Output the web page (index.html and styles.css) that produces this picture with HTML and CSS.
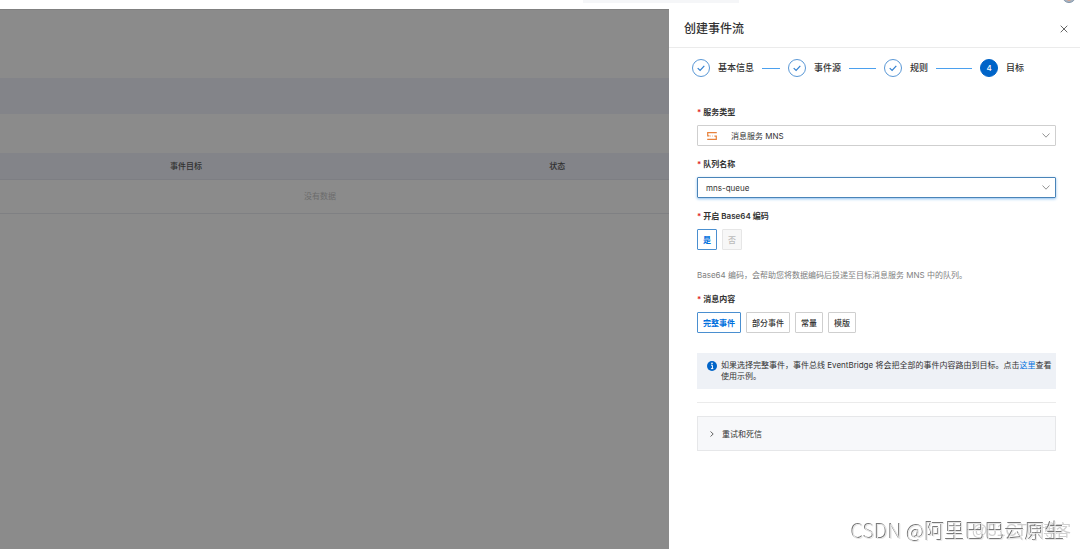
FILE: index.html
```html
<!DOCTYPE html>
<html lang="zh-CN">
<head>
<meta charset="utf-8">
<title>创建事件流</title>
<link rel="stylesheet" href="styles.css">
</head>
<body>
<header class="topbar">
  <div class="topbar-search"></div>
  <svg class="topbar-avatar" viewBox="0 0 14 3" aria-hidden="true"><circle cx="7" cy="-4" r="6.5" fill="#a9b4c0" stroke="#7f93a8"/><circle cx="7" cy="-1" r="2" fill="#d9a08c"/></svg>
</header>
<div class="layout">
  <main class="page">
    <div class="page-band"></div>
    <table class="streams">
      <colgroup><col class="col-source"><col class="col-target"><col></colgroup>
      <thead><tr><th></th><th>事件目标</th><th>状态</th></tr></thead>
      <tbody><tr><td colspan="3">没有数据</td></tr></tbody>
    </table>
  </main>
  <aside class="drawer">
    <div class="drawer-header">
      <h1>创建事件流</h1>
      <button class="close" type="button" aria-label="关闭"><svg viewBox="0 0 8 8"><path d="M.7.7l6.6 6.6M7.3.7L.7 7.3"/></svg></button>
    </div>
    <ol class="steps">
      <li class="step"><span class="step-dot"><svg viewBox="0 0 10 10"><path d="M1.7 5.1l2.4 2.3 4.2-4.5"/></svg></span><span>基本信息</span><i class="step-line"></i></li>
      <li class="step"><span class="step-dot"><svg viewBox="0 0 10 10"><path d="M1.7 5.1l2.4 2.3 4.2-4.5"/></svg></span><span>事件源</span><i class="step-line"></i></li>
      <li class="step"><span class="step-dot"><svg viewBox="0 0 10 10"><path d="M1.7 5.1l2.4 2.3 4.2-4.5"/></svg></span><span>规则</span><i class="step-line"></i></li>
      <li class="step"><span class="step-dot step-dot-current">4</span><span>目标</span></li>
    </ol>
    <form class="form">
      <div class="field">
        <label class="label" for="service">服务类型</label>
        <div class="select">
          <svg class="mns" viewBox="0 0 10 8" aria-hidden="true"><path d="M9.8.7H.7v3.1h1.8M.2 7.3h9.1V4.2H7.5"/><path class="mns-dots" d="M3 4h4.4"/></svg>
          <select id="service"><option>消息服务 MNS</option></select>
          <svg class="chevron" viewBox="0 0 8 5"><path d="M.5.5L4 4.2 7.5.5"/></svg>
        </div>
      </div>
      <div class="field">
        <label class="label" for="queue">队列名称</label>
        <div class="select select-focus">
          <select id="queue"><option>mns-queue</option></select>
          <svg class="chevron" viewBox="0 0 8 5"><path d="M.5.5L4 4.2 7.5.5"/></svg>
        </div>
      </div>
      <div class="field" role="group" aria-labelledby="base64">
        <span class="label" id="base64">开启 Base64 编码</span>
        <div class="options">
          <button class="option option-on" type="button">是</button>
          <button class="option" type="button" disabled>否</button>
        </div>
        <p class="help">Base64 编码，会帮助您将数据编码后投递至目标消息服务 MNS 中的队列。</p>
      </div>
      <div class="field" role="group" aria-labelledby="content">
        <span class="label" id="content">消息内容</span>
        <div class="options">
          <button class="option option-on" type="button">完整事件</button>
          <button class="option" type="button">部分事件</button>
          <button class="option" type="button">常量</button>
          <button class="option" type="button">模版</button>
        </div>
      </div>
      <div class="notice">
        <svg class="notice-icon" viewBox="0 0 10 10" aria-hidden="true"><circle cx="5" cy="5" r="5" fill="#0064c8"/><path d="M4 4.2h1.4v3.4M3.9 7.6h2.4" fill="none" stroke="#fff"/><circle cx="5" cy="2.4" r=".8" fill="#fff"/></svg>
        <p>如果选择完整事件，事件总线 EventBridge 将会把全部的事件内容路由到目标。点击<a href="#">这里</a>查看使用示例。</p>
      </div>
      <hr>
      <button class="collapse" type="button"><svg viewBox="0 0 4 6"><path d="M.5.5L3.2 3 .5 5.5"/></svg>重试和死信</button>
    </form>
  </aside>
</div>
<div class="mark mark-back">@51CTO博客</div>
<div class="mark mark-front">CSDN @阿里巴巴云原生</div>
</body>
</html>
```
FILE: styles.css
```css
* { box-sizing: border-box; }
body {
  margin: 0;
  min-height: 100vh;
  display: flex;
  flex-direction: column;
  overflow: hidden;
  background: #fff;
  color: #333;
  font: 8px/12px Inter, "Noto Sans CJK SC", sans-serif;
}
button, select { font: inherit; color: inherit; }
h1, p, ol { margin: 0; padding: 0; }
svg { display: block; flex: none; fill: none; }

.topbar {
  height: 9px;
  display: flex;
  justify-content: space-between;
  padding: 0 4px 0 54%;
}
.topbar-search { width: 156px; height: 3px; background: #f5f6f8; }
.topbar-avatar { width: 14px; height: 3px; }

.layout {
  flex: 1;
  display: grid;
  grid-template-columns: minmax(0, 669fr) minmax(0, 411fr);
}

.page { background: #8b8b8b; padding-top: 68px; border-top: 1px solid #808080; }
.page-band { height: 36px; margin-bottom: 39px; background: #838489; }
.streams { width: 100%; table-layout: fixed; border-collapse: collapse; }
.col-source { width: 25.4%; }
.col-target { width: 56.7%; }
.streams th {
  height: 26px;
  padding: 0;
  background: #838489;
  border-bottom: 1px solid #7d7e83;
  color: #303030;
  font-weight: 500;
  text-align: left;
}
.streams td {
  height: 34px;
  padding: 0 29px 0 0;
  border-bottom: 1px solid #7f8083;
  color: #6b6b6b;
  text-align: center;
}

.drawer { background: #fff; }
.drawer-header {
  height: 39px;
  display: flex;
  align-items: center;
  justify-content: space-between;
  padding: 1px 12px 0 15px;
  border-bottom: 1px solid #ebebeb;
}
.drawer-header h1 { font-size: 12px; line-height: 18px; font-weight: 500; }
.close { padding: 0; border: 0; background: none; }
.close svg { width: 8px; height: 8px; stroke: #555; stroke-width: .9; }

.steps {
  display: flex;
  padding: 11px 4px 0 23px;
  list-style: none;
  font-size: 9px;
  font-weight: 500;
}
.step { flex: 1 1 0; display: flex; align-items: center; gap: 8px; white-space: nowrap; }
.step-dot {
  flex: none;
  width: 18px;
  height: 18px;
  display: grid;
  place-items: center;
  border: 1px solid #5a98d6;
  border-radius: 50%;
}
.step-dot svg { width: 10px; height: 10px; stroke: #2f7fd0; stroke-width: 1.2; }
.step-dot-current { background: #0064c8; border-color: #0064c8; color: #fff; font-size: 8px; }
.step-line { flex: 1; height: 1px; margin-right: 8px; background: #4ba0ee; }

.form { padding: 29px 24px 0 28px; }
.field { margin-bottom: 12px; }
.label { display: block; margin-bottom: 7px; font-weight: 600; }
.label::before { content: "*"; margin-right: 2px; color: #e02020; }

.select {
  height: 21px;
  display: flex;
  align-items: center;
  padding: 0 5px 0 8px;
  border: 1px solid #cfcfcf;
  border-radius: 1px;
}
.select-focus { border-color: #4a84b8; box-shadow: 0 1px 3px #8dc0f0; }
.select select { flex: 1; min-width: 0; padding: 0; border: 0; outline: 0; background: none; appearance: none; }
.mns { width: 10px; height: 8px; margin: 0 14px 0 1px; stroke: #e8823c; stroke-width: 1.2; }
.mns-dots { stroke-width: 1; stroke-dasharray: 1 1; opacity: .6; }
.chevron { width: 8px; height: 5px; stroke: #888; stroke-width: .9; }

.options { display: flex; gap: 5px; }
.option {
  height: 21px;
  padding: 0 5px;
  border: 1px solid #cfcfcf;
  border-radius: 1px;
  background: #fff;
  font-weight: 500;
}
.option-on { border-color: #4a8fd0; color: #0070dd; font-weight: 600; }
.option:disabled { border-color: #e6e6e6; background: #f7f7f7; color: #bbb; }
.help { margin-top: 19px; color: #808080; }

.notice {
  display: flex;
  gap: 4px;
  margin-top: 20px;
  padding: 7px 4px 7px 10px;
  background: #eef1f6;
  line-height: 11px;
}
.notice-icon { width: 10px; height: 10px; margin-top: 1px; }
.notice a { color: #0070dd; text-decoration: none; }
hr { margin: 13px 0; border: 0; border-top: 1px solid #ebebeb; }
.collapse {
  width: 100%;
  height: 35px;
  display: flex;
  align-items: center;
  gap: 8px;
  padding: 0 12px;
  border: 1px solid #e6e7e9;
  background: #f7f8fa;
  font-weight: 400;
}
.collapse svg { width: 4px; height: 6px; stroke: #555; stroke-width: .9; }

.mark { position: fixed; white-space: nowrap; }
.mark-back { right: 9px; bottom: 8px; font-family: "Liberation Sans", "Noto Sans CJK SC", sans-serif; font-size: 16px; line-height: 20px; color: #d0d0d0; }
.mark-front { right: 15px; bottom: 5px; font-family: "Noto Sans CJK SC", sans-serif; font-size: 20px; line-height: 26px; font-weight: 300; color: #e6e6e6; text-shadow: -1px -1px 0 #777; }
```
